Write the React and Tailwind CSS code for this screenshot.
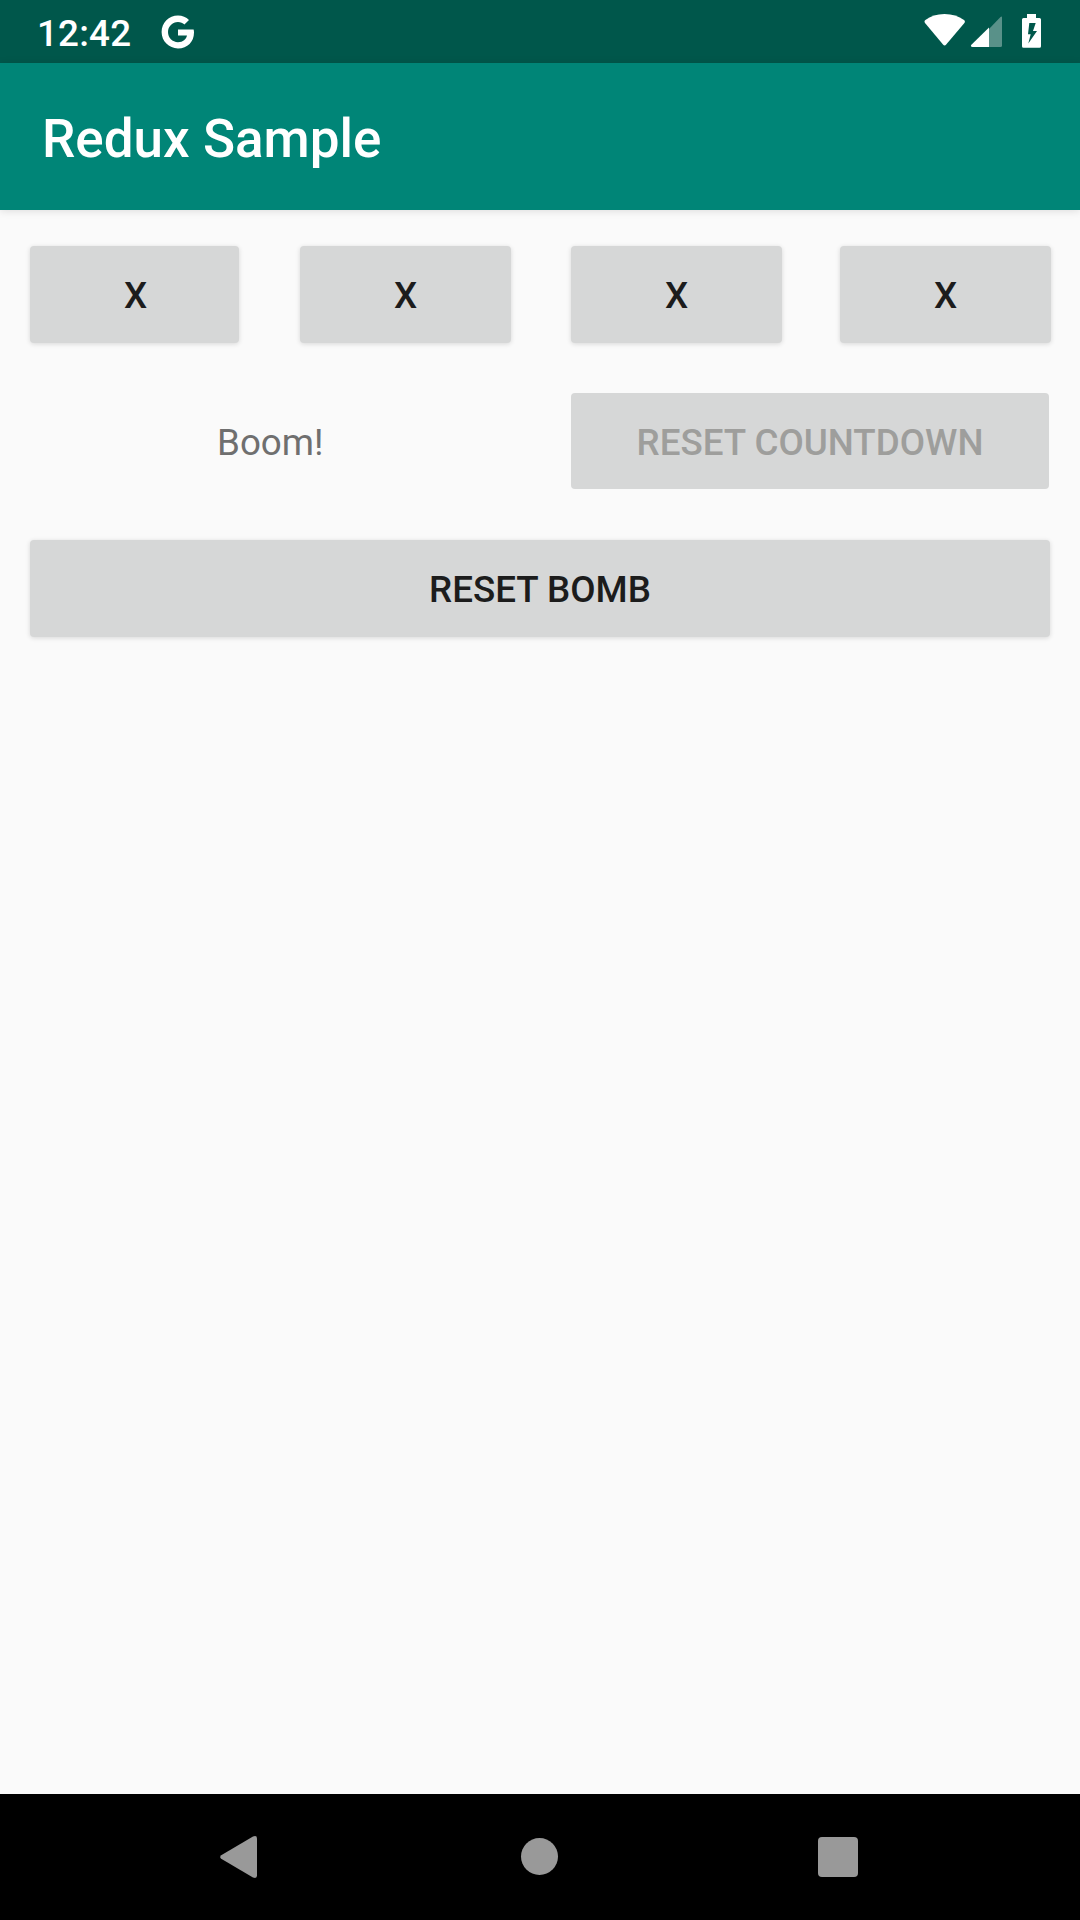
import React from "react";

function GoogleIcon() {
  return (
    <svg className="h-[34px] w-[34px]" viewBox="0 0 34 34">
      <path
        fill="#fff"
        d="M17 14.5H32.6C32.9 15.5 33 16.5 33 17.5C33 26.7 26.6 33.5 17 33.5C7.9 33.5 .6 26.2 .6 17.1S7.9 .6 17 .6C21.4 .6 25.2 2.2 28 4.9L23.4 9.5C21.8 7.9 19.6 7 17 7C11.4 7 7 11.4 7 17.1S11.4 27.2 17 27.2C22.2 27.2 25 24.4 26 20.5H17Z"
      />
    </svg>
  );
}

function StatusBar() {
  return (
    <div className="flex h-[63px] items-start bg-[#00574b] pl-[37px]">
      <span className="mt-[12px] w-[124px] text-[36.75px] leading-[43px] font-medium tracking-[0.2px]">12:42</span>
      <div className="mt-[14.5px]">
        <GoogleIcon />
      </div>
      <svg className="mr-[38px] ml-auto h-[63px] w-[118px]" viewBox="924 0 118 63">
        <path
          fill="#fff"
          d="M944.5 14Q956 14 964 20Q965.6 21.3 964.4 22.9L946.2 44.6Q944.6 46.3 943 44.6L925 22.9Q923.8 21.3 925.4 20Q933 14 944.5 14Z"
        />
        <path fill="#fff" fillOpacity="0.35" d="M988 30L1000.5 17Q1002 15.6 1002 17.6V45.5Q1002 47 1000.5 47H988Z" />
        <path fill="#fff" d="M989 27.5V47H972.5Q970 46.5 971.4 44.8Z" />
        <path
          fill="#fff"
          fillRule="evenodd"
          d="M1027 14H1036V18H1039.5Q1041 18 1041 19.5V46.3Q1041 47.8 1039.5 47.8H1023.5Q1022 47.8 1022 46.3V19.5Q1022 18 1023.5 18H1027ZM1029.3 23L1028 34.2H1030.7L1028.3 43.5L1037 31H1033L1035.7 23Z"
        />
      </svg>
    </div>
  );
}

function Button({ children, className = "" }) {
  return (
    <button
      className={
        "flex items-center justify-center rounded-[4px] bg-[#d6d7d7] pt-px text-[36.75px] leading-[43px] font-medium text-[#1c1c1c] shadow-[0_1px_5px_rgba(0,0,0,0.14)] " +
        className
      }
    >
      {children}
    </button>
  );
}

export default function App() {
  return (
    <div className="flex h-[1920px] w-[1080px] flex-col overflow-hidden bg-[#fafafa] font-['Roboto',sans-serif] text-white">
      <StatusBar />
      <header className="flex h-[147px] items-center bg-[#008577] pt-[4px] pl-[42px] text-[53px] leading-[62px] font-medium shadow-[0_1px_8px_rgba(0,0,0,0.12)]">
        Redux Sample
      </header>
      <main className="flex-1 pt-9 pl-[30px]">
        <div className="flex h-[97px]">
          <Button className="w-[209px] pl-[2px]">X</Button>
          <Button className="ml-[61px] w-[211px]">X</Button>
          <Button className="ml-[60px] w-[211px]">X</Button>
          <Button className="ml-[58px] w-[211px]">X</Button>
        </div>
        <div className="mt-[50px] flex h-24 w-[1019px]">
          <div className="flex w-[541px] items-center pt-[3px] pl-[187px] text-[36.75px] text-[#6f6f6f]">Boom!</div>
          <button
            disabled
            className="flex flex-1 items-center justify-center rounded-[4px] bg-[#d6d7d7] pt-[4px] text-[36.75px] font-medium text-[#9e9e9c]"
          >
            RESET COUNTDOWN
          </button>
        </div>
        <Button className="mt-[51px] h-[97px] w-[1020px]">RESET BOMB</Button>
      </main>
      <nav className="flex h-[126px] bg-black pt-[42px]">
        <svg className="ml-[220px] h-[42px] w-[37px]" viewBox="0 0 37 42">
          <path fill="#999" d="M33 .5Q37-1 37 2.5V39.5Q37 43 33 41.5L1.2 22.8Q-.8 21 1.2 19.2Z" />
        </svg>
        <div className="mt-[2px] ml-[264px] h-[37px] w-[37px] rounded-full bg-[#999]" />
        <div className="mt-px ml-[260px] h-10 w-10 rounded-[4px] bg-[#999]" />
      </nav>
    </div>
  );
}
